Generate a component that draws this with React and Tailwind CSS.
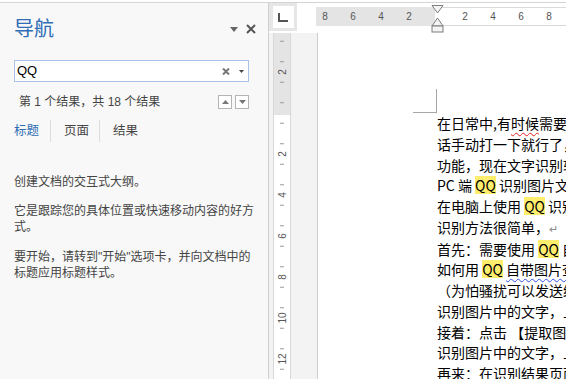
import React from 'react';

function HRuler() {
  const nums = [];
  [1, 2, 3, 4].forEach((k) => {
    nums.push({ x: 121 - 28 * k, t: String(2 * k) });
    nums.push({ x: 121 + 28 * k, t: String(2 * k) });
  });
  return (
    <div className="relative w-[250px] h-[19px]">
      <svg width="250" height="19" className="block">
        <rect x="0" y="0" width="250" height="19" fill="#ffffff" />
        <line x1="0" y1="0.5" x2="250" y2="0.5" stroke="#dadada" />
        <line x1="0" y1="18.5" x2="250" y2="18.5" stroke="#dadada" />
        <rect x="0" y="0" width="119" height="19" fill="#e4e4e4" />
        {nums.map((n, i) => (
          <text key={i} x={n.x} y="13" fontSize="10" fill="#555" textAnchor="middle" fontFamily="Liberation Sans, sans-serif">
            {n.t}
          </text>
        ))}
      </svg>
      {/* indent marker */}
      <svg width="13" height="28" className="absolute left-[115px] top-[-2px]">
        <polygon points="1,0.5 12,0.5 6.5,8" fill="#f4f4f4" stroke="#7d7d7d" />
        <polygon points="6.5,13 12,21 1,21" fill="#f4f4f4" stroke="#7d7d7d" />
        <rect x="1" y="21" width="11" height="6" fill="#f4f4f4" stroke="#7d7d7d" />
      </svg>
    </div>
  );
}

function VRuler() {
  const origin = 80;
  const labels = [
    { y: origin - 41, t: '2' },
    { y: origin + 41, t: '2' },
    { y: origin + 82, t: '4' },
    { y: origin + 123, t: '6' },
    { y: origin + 164, t: '8' },
    { y: origin + 205, t: '10' },
    { y: origin + 246, t: '12' },
  ];
  const ticks = [];
  for (let m = -4; m < 14; m++) {
    const y = origin + 10.25 * (2 * m + 1);
    if (y > 2 && y < 346) ticks.push(y);
  }
  return (
    <svg width="18" height="346" className="block">
      <rect x="0" y="0" width="18" height="346" fill="#ffffff" />
      <rect x="0" y="0" width="18" height={origin + 2} fill="#e4e4e4" />
      <line x1="0.5" y1="0" x2="0.5" y2="346" stroke="#d8d8d8" />
      <line x1="17.5" y1="0" x2="17.5" y2="346" stroke="#d8d8d8" />
      {ticks.map((y, i) => (
        <line key={i} x1="7" y1={y} x2="11" y2={y} stroke="#9a9a9a" />
      ))}
      {labels.map((l, i) => (
        <text
          key={i}
          x="9"
          y={l.y + 3.5}
          fontSize="10"
          fill="#555"
          textAnchor="middle"
          fontFamily="Liberation Sans, sans-serif"
          transform={`rotate(-90 9 ${l.y})`}
        >
          {l.t}
        </text>
      ))}
    </svg>
  );
}

function Hl({ children }) {
  return <span className="bg-[#ffee6e] inline-block leading-[18px]">{children}</span>;
}

function Wavy({ color, children }) {
  return <span className={`underline decoration-wavy underline-offset-[3px] decoration-1 ${color}`}>{children}</span>;
}

export default function App() {
  const panelFont = 'font-[Liberation_Sans,Noto_Sans_CJK_SC,sans-serif]';
  return (
    <div className="w-[566px] h-[379px] overflow-hidden bg-white flex flex-col">
      <div className="h-[2px] bg-white" />
      <div className="flex flex-1 min-h-0 border-t border-[#d4d4d4]">
        {/* navigation pane */}
        <aside className={`w-[269px] shrink-0 border-r border-[#cfcfcf] bg-[#f8f8f8] pl-[14px] pr-[12px] text-[#444] ${panelFont}`}>
          <div className="mt-[12px] h-[28px] flex items-center justify-between">
            <span className="text-[20px] leading-[28px] text-[#2f6db5]">导航</span>
            <div className="flex items-center gap-[8px] text-[#555]">
              <svg width="8" height="5" viewBox="0 0 8 5"><polygon points="0,0 8,0 4,5" fill="#666" /></svg>
              <svg width="10" height="10" viewBox="0 0 10 10">
                <path d="M1 1 L9 9 M9 1 L1 9" stroke="#555" strokeWidth="2" />
              </svg>
            </div>
          </div>

          <div className="mt-[17px] w-[235px] h-[22px] border border-[#a9c3e6] bg-white flex items-center">
            <span className="pl-[2px] text-[13px] text-black flex-1">QQ</span>
            <svg width="8" height="7" viewBox="0 0 8 7" className="mr-[9px]">
              <path d="M1 0.5 L7 6.5 M7 0.5 L1 6.5" stroke="#777" strokeWidth="2" />
            </svg>
            <svg width="5" height="3" viewBox="0 0 5 3" className="mr-[4px]">
              <polygon points="0,0 5,0 2.5,3" fill="#444" />
            </svg>
          </div>

          <div className="mt-[12px] h-[16px] w-[235px] flex items-center justify-between">
            <span className="pl-[5px] text-[12px] leading-[16px] whitespace-nowrap">第 1 个结果，共 18 个结果</span>
            <div className="flex gap-[3px]">
              <div className="w-[14px] h-[14px] border border-[#b4b4b4] bg-white flex items-center justify-center">
                <svg width="7" height="4" viewBox="0 0 7 4"><polygon points="0,4 7,4 3.5,0" fill="#777" /></svg>
              </div>
              <div className="w-[14px] h-[14px] border border-[#b4b4b4] bg-white flex items-center justify-center">
                <svg width="7" height="4" viewBox="0 0 7 4"><polygon points="0,0 7,0 3.5,4" fill="#777" /></svg>
              </div>
            </div>
          </div>

          <div className="mt-[10px] h-[22px] flex items-center text-[12.5px]">
            <span className="text-[#2f6db5] pr-[11px]">标题</span>
            <span className="w-px h-[22px] bg-[#dcdcdc]" />
            <span className="pl-[13px] pr-[10px]">页面</span>
            <span className="w-px h-[22px] bg-[#dcdcdc]" />
            <span className="pl-[13px]">结果</span>
          </div>

          <div className="mt-[32px] text-[12px] leading-[16px] whitespace-nowrap">
            <p>创建文档的交互式大纲。</p>
            <p className="mt-[13px]">
              它是跟踪您的具体位置或快速移动内容的好方
              <br />
              式。
            </p>
            <p className="mt-[14px]">
              要开始，请转到"开始"选项卡，并向文档中的
              <br />
              标题应用标题样式。
            </p>
          </div>
        </aside>

        {/* rulers + document */}
        <div className="flex-1 flex flex-col min-w-0">
          <div className="h-[30px] flex shrink-0">
            <div className="w-[28px] h-[28px] bg-[#e6e6e6] flex items-center justify-center">
              <div className="w-[21px] h-[22px] bg-white flex items-center justify-center">
                <svg width="10" height="9" viewBox="0 0 10 9">
                  <path d="M1 0 L1 8 L10 8" fill="none" stroke="#555" strokeWidth="2" />
                </svg>
              </div>
            </div>
            <div className="ml-[19px] mt-[4px]">
              <HRuler />
            </div>
          </div>

          <div className="flex flex-1 min-h-0">
            <div className="w-[49px] shrink-0 bg-[#f3f3f3] border-r border-[#cdcdcd] pl-[4px]">
              <VRuler />
            </div>
            <div className="flex-1 min-w-0 bg-white pl-[95px] pt-[56px] overflow-hidden font-[Noto_Sans_CJK_SC,sans-serif] text-[14px] text-black">
              <div className="w-[24px] h-[24px] border-r border-b border-[#a6a6a6]" />
              <div className="ml-[24px] leading-[20.75px] whitespace-nowrap overflow-hidden">
                <div>
                  在日常中,有<Wavy color="decoration-[#e02020]">时候</Wavy>需要把图片中的文字
                </div>
                <div>话手动打一下就行了，但是如果</div>
                <div>功能，现在文字识别软件很多</div>
                <div>
                  PC 端 <Hl>QQ</Hl> 识别图片文字的功能
                </div>
                <div>
                  在电脑上使用 <Hl>QQ</Hl> 识别图片中
                </div>
                <div>
                  识别方法很简单，<span className="text-[11px] text-[#8a8a8a]">↵</span>
                </div>
                <div>
                  首先：需要使用 <Hl>QQ</Hl> 自带的截图
                </div>
                <div>
                  如何用 <Hl>QQ</Hl> <Wavy color="decoration-[#3050e0]">自带图片查看器</Wavy>
                </div>
                <div>（为怕骚扰可以发送给自己）</div>
                <div>识别图片中的文字，上面</div>
                <div>接着：点击 【提取图中文字】</div>
                <div>识别图片中的文字，上面</div>
                <div>
                  再来：在识别结果<Wavy color="decoration-[#3050e0]">页面</Wavy>
                </div>
              </div>
            </div>
          </div>
        </div>
      </div>
    </div>
  );
}
